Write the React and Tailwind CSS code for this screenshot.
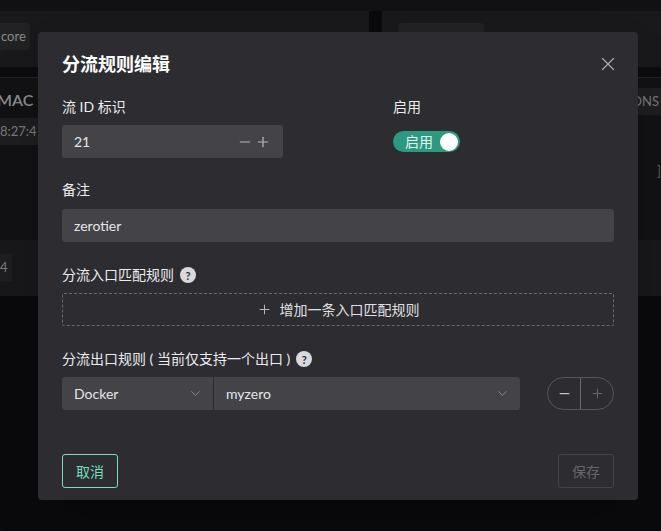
import { X, Minus, Plus, ChevronDown } from 'lucide-react'

function Help() {
  return (
    <span className="ml-[6px] inline-flex h-[16px] w-[16px] items-center justify-center rounded-full bg-[#d9d9dc] text-[11px] font-bold leading-none text-[#2c2c31]">
      ?
    </span>
  )
}

function Backdrop() {
  return (
    <div className="flex h-[531px] flex-col bg-[#0a0a0c]">
      <div className="h-[11px] bg-[#111114]" />
      <div className="flex h-[56px] gap-[13px]">
        <div className="flex w-[369px] items-start bg-[#19191b] pt-[12px]">
          <span className="flex h-[27px] items-center rounded-r bg-[#222224] pr-[4px] pl-[1px] text-[13px] text-[#8a8a8c]">core</span>
        </div>
        <div className="flex flex-1 items-start bg-[#19191b] pt-[12px] pl-[16px]">
          <span className="h-[27px] w-[86px] rounded bg-[#222224]" />
        </div>
      </div>
      <div className="h-[10px] bg-[#0c0c0e]" />
      <div className="flex h-[219px] flex-col border-t border-[#222224] bg-[#121214]">
        <div className="flex h-[162px] justify-between">
          <div className="flex w-[60px] flex-col">
            <span className="mt-[10px] -ml-[3px] text-[16px] font-semibold whitespace-nowrap text-[#8c8c8e]">MAC 源</span>
            <span className="mt-[6px] flex h-[27px] items-center bg-[#1e1e20] text-[13px] text-[#7a7a7c]">8:27:4</span>
          </div>
          <div className="flex w-[40px] flex-col items-end">
            <span className="mt-[10px] flex h-[27px] items-center bg-[#1e1e20] pr-[2px] text-[13px] text-[#7a7a7c]">ONS</span>
            <span className="mt-[47px] text-[13px] text-[#5a5a5c]">]</span>
          </div>
        </div>
        <div className="flex flex-1 items-start bg-[#18181a] pt-[14px]">
          <span className="flex h-[27px] w-[12px] items-center bg-[#1f1f21] text-[13px] text-[#7a7a7c]">4</span>
        </div>
      </div>
    </div>
  )
}

export default function App() {
  return (
    <div className="relative h-[531px] w-[661px] overflow-hidden font-['Lato','Noto_Sans_CJK_SC',sans-serif] text-[14px]">
      <Backdrop />
      <div className="absolute top-[32px] left-[38px] flex h-[468px] w-[600px] flex-col rounded-[4px] bg-[#2c2c31] px-[24px] pt-[20px] pb-[12px] shadow-2xl">
        <div className="flex items-center justify-between">
          <h2 className="text-[18px] leading-[24px] font-bold text-white">分流规则编辑</h2>
          <X className="mr-[-5px] h-[22px] w-[22px] text-[#a8a8ab]" strokeWidth={1.4} />
        </div>

        <div className="mt-[21px] grid grid-cols-[221px_1fr] gap-x-[110px]">
          <div>
            <p className="leading-[20px] text-[#ececee]">流 ID 标识</p>
            <div className="mt-[8px] flex h-[33px] items-center justify-between rounded-[3px] bg-[#434348] px-[12px] text-[#e6e6e8]">
              <span>21</span>
              <span className="flex items-center gap-[2px] text-[#b8b8bb]">
                <Minus className="h-[16px] w-[16px]" strokeWidth={1.8} />
                <Plus className="h-[16px] w-[16px]" strokeWidth={1.8} />
              </span>
            </div>
          </div>
          <div>
            <p className="leading-[20px] text-[#ececee]">启用</p>
            <div className="mt-[14px] flex h-[21px] w-[67px] items-center justify-between rounded-full bg-[#2a9a80] pr-[2px] pl-[12px]">
              <span className="text-[14px] leading-none text-[#e8f5f0]">启用</span>
              <span className="h-[18px] w-[18px] rounded-full bg-white" />
            </div>
          </div>
        </div>

        <p className="mt-[22px] leading-[20px] text-[#ececee]">备注</p>
        <div className="mt-[9px] flex h-[33px] items-center rounded-[3px] bg-[#434348] px-[12px] text-[#e6e6e8]">zerotier</div>

        <p className="mt-[23px] flex items-center leading-[20px] text-[#ececee]">
          分流入口匹配规则
          <Help />
        </p>
        <div className="mt-[8px] flex h-[33px] items-center justify-center gap-[8px] rounded-[2px] border border-dashed border-[#69696e] text-[#e0e0e2]">
          <Plus className="h-[15px] w-[15px] text-[#b8b8bb]" strokeWidth={1.6} />
          <span>增加一条入口匹配规则</span>
        </div>

        <p className="mt-[23px] flex items-center leading-[20px] text-[#ececee]">
          分流出口规则 ( 当前仅支持一个出口 )
          <Help />
        </p>
        <div className="mt-[8px] flex items-center">
          <div className="flex h-[33px] w-[458px] rounded-[3px] bg-[#434348] text-[#e6e6e8]">
            <div className="flex w-[152px] items-center justify-between border-r border-[#2c2c31] pr-[10px] pl-[12px]">
              <span>Docker</span>
              <ChevronDown className="h-[15px] w-[15px] text-[#8e8e92]" strokeWidth={1.5} />
            </div>
            <div className="flex flex-1 items-center justify-between pr-[10px] pl-[12px]">
              <span>myzero</span>
              <ChevronDown className="h-[15px] w-[15px] text-[#8e8e92]" strokeWidth={1.5} />
            </div>
          </div>
          <div className="ml-auto flex h-[33px] w-[67px] overflow-hidden rounded-full border border-[#56565b]">
            <span className="flex w-[33px] items-center justify-center border-r border-[#6a6a6f] text-[#c4c4c7]">
              <Minus className="h-[15px] w-[15px]" strokeWidth={2} />
            </span>
            <span className="flex flex-1 items-center justify-center text-[#66666b]">
              <Plus className="h-[15px] w-[15px]" strokeWidth={1.6} />
            </span>
          </div>
        </div>

        <div className="mt-auto flex items-center justify-between">
          <button type="button" className="flex h-[34px] w-[56px] items-center justify-center rounded-[3px] border border-[#74dfc0] text-[#74dfc0]">
            取消
          </button>
          <button type="button" className="flex h-[34px] w-[56px] items-center justify-center rounded-[3px] border border-[#434348] text-[#66666b]">
            保存
          </button>
        </div>
      </div>
    </div>
  )
}
